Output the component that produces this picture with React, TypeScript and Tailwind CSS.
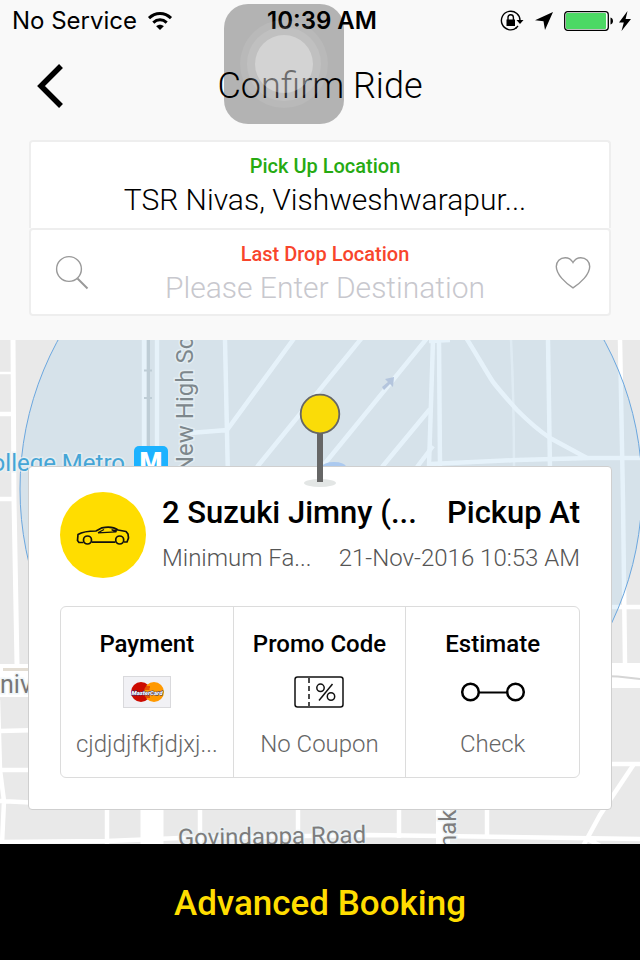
import React from "react";

function StatusBar() {
  return (
    <div className="grid h-10 grid-cols-[1fr_auto_1fr] items-center pl-3 pr-2 pt-0.5 font-['Inter',sans-serif] text-[24px] leading-8 text-black">
      <div className="flex items-center gap-2.5">
        <span>No Service</span>
        <svg width="26" height="20" viewBox="0 0 26 20" fill="none" stroke="#000" strokeWidth="3" aria-hidden="true">
          <path d="M2 7.2C8.4 1 17.600 1 24 7.200" />
          <path d="M6.300 11.600C10.300 7.900 15.700 7.900 19.700 11.600" />
          <path d="M13 19 9.200 15.200C11.400 13.200 14.600 13.200 16.800 15.200Z" fill="#000" stroke="none" />
        </svg>
      </div>
      <span className="font-semibold">10:39 AM</span>
      <div className="flex items-center justify-end gap-1">
        <svg width="24" height="22" viewBox="0 0 24 22" fill="none" stroke="#000" strokeWidth="1.400" aria-hidden="true">
          <path d="M20 11A9.300 9.300 0 1 0 16.500 17.800" />
          <path d="M15.500 18.500 18 16" />
          <path d="M16.500 10h7L20 14Z" fill="#000" stroke="none" />
          <rect x="6.500" y="9.500" width="8.500" height="6.500" fill="#000" stroke="none" />
          <path d="M8 10V7.500a2.700 2.700 0 0 1 5.400 0V10" />
        </svg>
        <svg className="ml-1.5" width="20" height="20" viewBox="0 0 20 20" aria-hidden="true">
          <path d="M19 1 1 9.300l8.500 1L11 19Z" />
        </svg>
        <svg className="ml-1.5" width="50" height="20" viewBox="0 0 50 20" aria-hidden="true">
          <rect x="0.700" y="0.700" width="43.600" height="18.600" rx="3" fill="#fff" stroke="#000" strokeWidth="1.300" />
          <rect x="2" y="2" width="40" height="16" rx="1" fill="#4cd964" />
          <path d="M46.500 6.500c3.300.6 3.300 6.400 0 7Z" />
        </svg>
        <svg width="14" height="20" viewBox="0 0 14 20" aria-hidden="true">
          <path d="M9.500 0 1 11.500h4.800L3.500 20 13 8H7.600Z" />
        </svg>
      </div>
    </div>
  );
}

function MapCanvas() {
  return (
    <svg
      className="absolute inset-0 h-full w-full font-['Roboto',sans-serif]"
      viewBox="0 340 640 504"
      preserveAspectRatio="xMidYMin slice"
      aria-hidden="true"
    >
      <rect x="0" y="340" width="640" height="504" fill="#e9e9e9" />
      <g fill="none" stroke="#fff" strokeWidth="4.500">
        <path d="M13 340 14 500 17 664" strokeWidth="5" />
        <path d="M0 373H12" strokeWidth="2.500" />
        <path d="M0 414H15M0 499H15" />
        <path d="M0 680.500H60" strokeWidth="33" />
        <path d="M580 675.500H640" strokeWidth="25" />
        <path d="M0 731 40 730M0 770H40M0 801 40 803M-2 700 0 770 4 801 2 844" />
        <path d="M144 340V480M157 340V480" />
        <path d="M225 340 228 480M190 433 227 430 298 333M257 467 365 334M322 467 428 337M382 467 430 409M417 467 433 446" />
        <path d="M433 340 429 466M439 340 440 466M429 341 450 340" />
        <path d="M465 336C480 360 484 368 493 382 500 391 508 400 517 410 528 421 538 430 550 438L587 458" />
        <path d="M430 464 517 460 590 458H640" />
        <path d="M511 340C513 380 514 400 514 466" strokeWidth="2.500" opacity="0.600" />
        <path d="M548 340 550 470M620 340 623 500 625 664M600 607H640M600 764H640" />
        <path d="M634 764 600 815 582 848" />
        <path d="M107 800V844M200 800V844M298 800V838M399 800V838M487 800V838" />
        <path d="M152 800V844" strokeWidth="23" />
        <path d="M443 800V844" strokeWidth="14" />
        <path d="M0 842 107 841 180 838 370 835 640 839M586 838 604 848" />
      </g>
      <path d="M3 669.500H40" stroke="#e3ddd3" strokeWidth="3" />
      <path d="M600 676C620 676 625 677 640 679" fill="none" stroke="#d5d5d5" strokeWidth="2" />
      <g stroke="#c9ccce">
        <path d="M148.500 340V480" strokeWidth="3" />
        <path d="M144 370.500H152M144 398H152" strokeWidth="2" />
      </g>
      <circle cx="331" cy="489" r="311" fill="#a3cfed" fillOpacity="0.270" stroke="#6ba7df" strokeWidth="1" />
      <path d="M382 387 388 382 385 379 394 377 393 387 390 384 384 390Z" fill="#b4c5dd" />
      <ellipse cx="334" cy="467" rx="12" ry="5" fill="#abc9ef" />
      <g fontSize="24" fill="#7d878c" stroke="#eaf2f6" strokeWidth="3" strokeOpacity="0.700" paintOrder="stroke">
        <text transform="translate(193 473) rotate(-90)">New High School</text>
        <text x="-24" y="471" fill="#45a5d6">College Metro</text>
        <text x="0" y="693" fontSize="25" fill="#777">niv</text>
        <text transform="translate(178 846) rotate(-1)" fill="#7d7d7d">Govindappa Road</text>
        <text transform="translate(456 848) rotate(-90)" fill="#7d7d7d">nak</text>
      </g>
      <rect x="134" y="446" width="34" height="34" rx="5" fill="#1cb2ff" />
      <text x="151" y="471" fontSize="26" fontWeight="900" textAnchor="middle" fill="#fff">M</text>
    </svg>
  );
}

function Pin() {
  return (
    <svg
      className="absolute left-1/2 top-[52px] -translate-x-1/2"
      width="44"
      height="98"
      viewBox="0 0 44 98"
      aria-hidden="true"
    >
      <ellipse cx="22" cy="91" rx="16" ry="4" fill="#e3e6e5" />
      <path d="M22 38V90" stroke="#666" strokeWidth="6" />
      <circle cx="22" cy="22" r="19.300" fill="#fadc08" stroke="#666" strokeWidth="1.800" />
    </svg>
  );
}

function CarIcon() {
  return (
    <svg width="54" height="20" viewBox="0 0 54 20" fill="none" stroke="#111" strokeWidth="1.700" strokeLinejoin="round" aria-hidden="true">
      <path d="M7.500 17.500H3L1.500 15.500 2 9.500C6 7 12 6 20 6L26 2.800C32 1.600 38 2 42 5L50 6.500 52 9 52.500 13 51 17H48M39.500 17.200H15.500" />
      <circle cx="11.500" cy="15" r="4" />
      <circle cx="43.700" cy="15" r="4" />
      <path d="M22 7.800 28 4.500M22 7.800 40 6.800 36 4.800 41 5.800" strokeWidth="1.300" />
    </svg>
  );
}

function MasterCardIcon() {
  return (
    <svg width="48" height="32" viewBox="0 0 48 32" aria-hidden="true">
      <rect x="0.500" y="0.500" width="47" height="31" fill="#f1f1f5" stroke="#d9d9dc" />
      <circle cx="18" cy="16" r="10" fill="#cc0a00" />
      <circle cx="31" cy="16" r="10" fill="#ff9900" />
      <path d="M22 11h5M21.500 13h5M21.500 19h5M22 21h5" stroke="#cc0a00" />
      <text x="24" y="18.500" textAnchor="middle" fontSize="6" fontWeight="900" fontStyle="italic" fill="#fff" stroke="#26317c" strokeWidth="0.800" paintOrder="stroke">
        MasterCard
      </text>
    </svg>
  );
}

function CouponIcon() {
  return (
    <svg width="50" height="32" viewBox="0 0 50 32" fill="none" stroke="#111" strokeWidth="1.500" aria-hidden="true">
      <rect x="1" y="1" width="48" height="30" rx="2.500" />
      <path d="M15 2V30" strokeDasharray="5 3" />
      <circle cx="26.500" cy="11.800" r="3.700" />
      <circle cx="37" cy="20.500" r="3.700" />
      <path d="M38.500 8 25 24.500" />
    </svg>
  );
}

function RouteIcon() {
  return (
    <svg width="66" height="20" viewBox="0 0 66 20" fill="none" stroke="#000" aria-hidden="true">
      <path d="M19 10.500H47" strokeWidth="2" />
      <circle cx="10.500" cy="10" r="8.300" strokeWidth="2.500" />
      <circle cx="55.500" cy="10" r="8.300" strokeWidth="2.500" />
    </svg>
  );
}

const options = [
  { title: "Payment", icon: <MasterCardIcon />, value: "cjdjdjfkfjdjxj..." },
  { title: "Promo Code", icon: <CouponIcon />, value: "No Coupon" },
  { title: "Estimate", icon: <RouteIcon />, value: "Check" },
];

function RideCard() {
  return (
    <section className="relative mx-7 mt-[126px] rounded border border-[#cfcfcf] bg-white px-[31px] pb-[31px] pt-[25px]">
      <div className="flex items-start gap-4">
        <div className="flex size-[86px] shrink-0 items-center justify-center rounded-full bg-[#fd0]">
          <CarIcon />
        </div>
        <div className="min-w-0 flex-1 whitespace-nowrap">
          <div className="flex justify-between text-[31px] font-medium leading-[42px]">
            <h2>2 Suzuki Jimny (...</h2>
            <p>Pickup At</p>
          </div>
          <div className="mt-2 flex justify-between text-[24px] font-light leading-8 text-[#555]">
            <p>Minimum Fa...</p>
            <p>21-Nov-2016 10:53 AM</p>
          </div>
        </div>
      </div>
      <div className="mt-7 grid grid-cols-3 divide-x divide-[#dcdcdc] rounded-md border border-[#dcdcdc]">
        {options.map((o) => (
          <button key={o.title} type="button" className="flex flex-col items-center whitespace-nowrap pb-[17px] pt-[21px] text-[24px] leading-8">
            <span className="font-medium text-black">{o.title}</span>
            <span className="mt-4 flex h-8 items-center">{o.icon}</span>
            <span className="mt-5 font-light text-[#666]">{o.value}</span>
          </button>
        ))}
      </div>
    </section>
  );
}

export default function App() {
  return (
    <div className="flex min-h-screen flex-col overflow-hidden bg-[#f9f9f9] font-['Roboto',sans-serif] text-black">
      <div className="relative">
        <StatusBar />
        <header className="mb-2 grid h-[92px] grid-cols-[1fr_auto_1fr] items-center">
          <button type="button" aria-label="Back" className="ml-9 w-8">
            <svg width="32" height="46" viewBox="0 0 32 46" fill="none" stroke="#000" strokeWidth="5.500" aria-hidden="true">
              <path d="M25 3 5 23 25 43" />
            </svg>
          </button>
          <h1 className="text-[36px] font-light leading-10">Confirm Ride</h1>
        </header>
        <div className="absolute left-[calc(50%-96px)] top-1 flex size-[120px] items-center justify-center rounded-[24px] bg-black/28">
          <div className="flex size-[88px] items-center justify-center rounded-full bg-white/8">
            <div className="flex size-[74px] items-center justify-center rounded-full bg-white/10">
              <div className="size-[58px] rounded-full bg-white/30" />
            </div>
          </div>
        </div>
      </div>

      <form className="mx-[29px] mb-6">
        <div className="rounded-t border-2 border-b-0 border-[#eee] bg-white pb-2 pl-[72px] pr-[62px] pt-3 text-center">
          <label htmlFor="pickup" className="block text-[20px] font-medium leading-6 text-[#26aa12]">
            Pick Up Location
          </label>
          <input
            id="pickup"
            readOnly
            value="TSR Nivas, Vishweshwarapur..."
            className="block h-[42px] w-full bg-transparent text-center text-[30px] font-light leading-10 text-black outline-none"
          />
        </div>
        <div className="flex items-center rounded border-2 border-[#eee] bg-white pb-1.5 pl-6 pr-[18px] pt-3">
          <svg className="mb-1 shrink-0" width="36" height="36" viewBox="0 0 36 36" fill="none" stroke="#999" aria-hidden="true">
            <circle cx="14" cy="14" r="12.400" strokeWidth="1.400" />
            <path d="M22.500 23.500 32.500 33.500" strokeWidth="2" />
          </svg>
          <div className="min-w-0 flex-1 pl-3 pr-2 text-center">
            <label htmlFor="drop" className="block text-[20px] font-medium leading-6 text-[#f8452c]">
              Last Drop Location
            </label>
            <input
              id="drop"
              placeholder="Please Enter Destination"
              className="block h-[42px] w-full bg-transparent text-center text-[30px] font-light leading-10 outline-none placeholder:text-[#c8c8ce]"
            />
          </div>
          <button type="button" aria-label="Save as favourite" className="mb-1 shrink-0">
            <svg width="36" height="34" viewBox="0 0 36 34" fill="none" stroke="#999" strokeWidth="1.400" aria-hidden="true">
              <path d="M18 6.500C16 3 13 1.700 10.200 1.700 5 1.700 1.300 5.600 1.300 10.500 1.300 18.500 10.500 27 18 31.800 25.500 27 34.700 18.500 34.700 10.500 34.700 5.600 31 1.700 25.800 1.700 23 1.700 20 3 18 6.500Z" />
            </svg>
          </button>
        </div>
      </form>

      <main className="relative flex-1 overflow-hidden pb-[34px]">
        <MapCanvas />
        <RideCard />
        <Pin />
      </main>

      <button type="button" className="relative h-[116px] w-full shrink-0 bg-black pt-1 text-[35px] font-medium leading-10 text-[#fd0]">
        Advanced Booking
      </button>
    </div>
  );
}
